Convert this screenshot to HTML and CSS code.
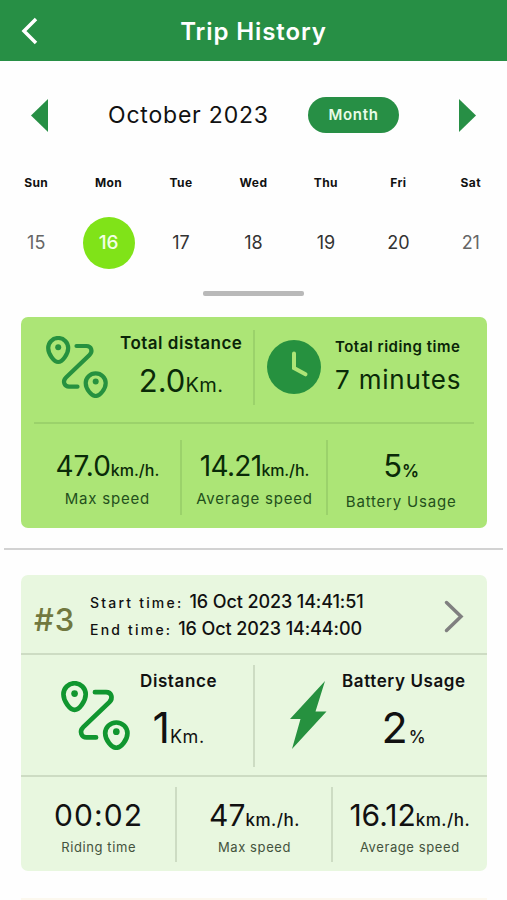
FILE: index.html
```html
<!DOCTYPE html>
<html lang="en">
<head>
    <meta charset="UTF-8">
    <title>Trip History</title>
    <link rel="stylesheet" href="styles.css">
</head>
<body>
    <svg class="defs">
        <symbol id="route" viewBox="0 0 62 62">
            <g fill="none" stroke="currentColor" stroke-width="4.200" stroke-linecap="round">
                <path d="M12.200 26C8 26 2.200 18 2.200 12a10 10 0 0 1 20 0C22.200 18 16.400 26 12.200 26z"/>
                <path d="M49.700 60C45.500 60 39.700 53 39.700 47a10 9.700 0 0 1 20 0C59.700 53 53.900 60 49.700 60z"/>
                <path d="M30.500 10h10c5 0 6.500 5.500 3 9L20 41.500c-4 4-1.500 9.200 3 9.200h8.500"/>
            </g>
            <circle cx="12.200" cy="11.300" r="3" fill="currentColor"/>
            <circle cx="49.700" cy="45.500" r="3" fill="currentColor"/>
        </symbol>
    </svg>

    <header class="header">
        <svg class="back" viewBox="0 0 18 28"><path d="M15 2L3 14l12 12"/></svg>
        <h1>Trip History</h1>
    </header>

    <div class="month_bar">
        <svg class="prev" viewBox="0 0 17 33"><path d="M17 0v33L0 16.500z"/></svg>
        <span class="month">October 2023</span>
        <span class="month_btn">Month</span>
        <svg class="next" viewBox="0 0 17 33"><path d="M0 0v33L17 16.500z"/></svg>
    </div>

    <div class="week names">
        <span>Sun</span><span>Mon</span><span>Tue</span><span>Wed</span><span>Thu</span><span>Fri</span><span>Sat</span>
    </div>
    <div class="week dates">
        <span class="dim">15</span><span class="active">16</span><span>17</span><span>18</span><span>19</span><span>20</span><span class="dim">21</span>
    </div>
    <div class="handle"></div>

    <!-- total of the day -->
    <section class="summary">
        <div class="summary_top">
            <div class="total_distance">
                <svg class="route_icon"><use href="#route"/></svg>
                <div class="text">
                    <h2>Total distance</h2>
                    <p class="value">2.0<small>Km.</small></p>
                </div>
            </div>
            <div class="total_time">
                <svg class="clock" viewBox="0 0 54 54">
                    <circle cx="27" cy="27" r="27"/>
                    <path d="M27 13.500v14.500l11.500 6.300"/>
                </svg>
                <div class="text">
                    <h2>Total riding time</h2>
                    <p class="value">7 minutes</p>
                </div>
            </div>
        </div>
        <div class="stats">
            <div class="stat">
                <p class="value">47.0<small>km./h.</small></p>
                <p class="label">Max speed</p>
            </div>
            <div class="stat average">
                <p class="value">14.21<small>km./h.</small></p>
                <p class="label">Average speed</p>
            </div>
            <div class="stat battery">
                <p class="value">5<small>%</small></p>
                <p class="label">Battery Usage</p>
            </div>
        </div>
    </section>

    <hr class="line">

    <!-- one trip -->
    <section class="trip">
        <div class="trip_head">
            <span class="number">#3</span>
            <div class="times">
                <p><span>Start time:</span>16 Oct 2023 14:41:51</p>
                <p><span>End time:</span>16 Oct 2023 14:44:00</p>
            </div>
            <svg class="more" viewBox="0 0 20 33"><path d="M2.500 2.500l14.500 14-14.500 14"/></svg>
        </div>
        <div class="trip_middle">
            <div class="trip_distance">
                <svg class="route_icon"><use href="#route"/></svg>
                <div class="text">
                    <h2>Distance</h2>
                    <p class="value">1<small>Km.</small></p>
                </div>
            </div>
            <div class="trip_battery">
                <svg class="bolt" viewBox="0 0 37 68"><path d="M35 0L0 38h10.500L2 68l34.500-37.500H25.500z"/></svg>
                <div class="text">
                    <h2>Battery Usage</h2>
                    <p class="value">2<small>%</small></p>
                </div>
            </div>
        </div>
        <div class="stats">
            <div class="stat">
                <p class="value clock_value">00:02</p>
                <p class="label">Riding time</p>
            </div>
            <div class="stat">
                <p class="value">47<small>km./h.</small></p>
                <p class="label">Max speed</p>
            </div>
            <div class="stat">
                <p class="value">16.12<small>km./h.</small></p>
                <p class="label">Average speed</p>
            </div>
        </div>
    </section>

    <section class="next_trip"></section>
</body>
</html>
```
FILE: styles.css
```css
* {
    margin: 0;
    padding: 0;
    box-sizing: border-box;
}
body {
    height: 900px;
    overflow: hidden;
    background-color: #fefefe;
    color: #111;
    font-family: "Inter", "Noto Sans", sans-serif;
    white-space: nowrap;
}
svg {
    display: block;
    flex: none;
}
.defs {
    position: absolute;
    width: 0;
    height: 0;
}

/* header */
.header {
    display: grid;
    grid-template-columns: 60px 1fr 60px;
    align-items: center;
    height: 61px;
    background-color: #278f45;
    color: #fff;
}
.header h1 {
    font-size: 24px;
    font-weight: 600;
    letter-spacing: 0.9px;
    text-align: center;
    line-height: 61px;
    padding-top: 1px;
}
.back {
    width: 18px;
    height: 28px;
    margin-left: 21px;
    fill: none;
    stroke: #fff;
    stroke-width: 3.5;
}

/* month */
.month_bar {
    display: flex;
    align-items: center;
    height: 108px;
    padding: 0 31px;
}
.prev, .next {
    width: 17px;
    height: 33px;
    fill: #278f45;
}
.month {
    width: 160px;
    margin: 0 40px 0 60px;
    font-size: 23px;
    line-height: 34px;
    letter-spacing: 0.8px;
}
.month_btn {
    width: 91px;
    height: 36px;
    border-radius: 18px;
    background-color: #278f45;
    color: #e8fbe8;
    font-size: 15px;
    font-weight: 600;
    letter-spacing: 0.7px;
    line-height: 36px;
    text-align: center;
}
.next {
    margin-left: auto;
}

/* week */
.week {
    display: grid;
    grid-template-columns: repeat(7, 1fr);
    justify-items: center;
}
.names {
    font-size: 12px;
    font-weight: 700;
    line-height: 27px;
    letter-spacing: 0.4px;
}
.dates {
    margin-top: 21px;
    font-size: 18px;
    line-height: 52px;
    color: #333;
}
.dates .dim {
    color: #666;
}
.dates .active {
    width: 52px;
    height: 52px;
    border-radius: 50%;
    background-color: #80e318;
    color: #f4ffe6;
    font-size: 19px;
    font-weight: 500;
    text-align: center;
}
.handle {
    width: 101px;
    height: 5px;
    margin: 22px auto 0;
    border-radius: 2px;
    background-color: #b9b9b9;
}

/* summary */
.summary {
    height: 211px;
    margin: 21px 20px 0 21px;
    padding: 0 13px;
    border-radius: 7px;
    background-color: #ace576;
    color: #0a2a08;
}
.summary_top {
    display: grid;
    grid-template-columns: 221px 1fr;
    height: 107px;
    padding: 13px 0 17px;
    border-bottom: 2px solid #9bd26b;
}
.summary .text {
    line-height: 26px;
}
.summary h2 {
    color: #0a2408;
}
.total_distance {
    display: flex;
    padding-left: 12px;
    border-right: 2px solid #9bd26b;
}
.total_distance .route_icon {
    width: 62px;
    height: 62px;
    margin-top: 6px;
    color: #26913f;
}
.total_distance .text {
    margin-left: 12px;
    text-align: center;
}
.total_distance h2 {
    font-size: 17px;
    font-weight: 600;
    letter-spacing: 0.5px;
}
.total_distance .value {
    margin-top: 2px;
    font-size: 31px;
    line-height: 46px;
}
.total_distance small {
    font-size: 20px;
    letter-spacing: 0.5px;
    line-height: 1;
}
.total_time {
    display: flex;
    padding-left: 12px;
}
.clock {
    width: 54px;
    height: 54px;
    margin-top: 10px;
}
.clock circle {
    fill: #26913f;
}
.clock path {
    fill: none;
    stroke: #ace576;
    stroke-width: 4;
    stroke-linecap: round;
}
.total_time .text {
    margin: 4px 0 0 14px;
}
.total_time h2 {
    font-size: 15px;
    font-weight: 600;
    letter-spacing: 0.5px;
}
.total_time .value {
    margin-top: 3px;
    font-size: 26px;
    line-height: 34px;
    letter-spacing: 0.8px;
}

/* three columns of numbers */
.stats {
    display: grid;
    grid-template-columns: repeat(3, 1fr);
}
.stat {
    text-align: center;
}
.stat + .stat {
    margin-left: -1px;
    border-left: 2px solid #9bd26b;
}
.stat small {
    font-weight: 500;
    line-height: 1;
}
.summary .stats {
    height: 75px;
    margin-top: 16px;
}
.summary .stat .value {
    padding-top: 6px;
    font-size: 28px;
    line-height: 40px;
}
.summary .stat small {
    font-size: 16px;
}
.summary .average .value {
    letter-spacing: -0.7px;
}
.summary .average small {
    letter-spacing: -0.1px;
}
.summary .stat .label {
    font-size: 15px;
    line-height: 25px;
    letter-spacing: 0.8px;
    color: #23501c;
}
.summary .battery .value {
    font-size: 31px;
}
.summary .battery small {
    font-size: 17px;
    font-weight: 600;
}
.summary .battery .label {
    padding-top: 3px;
}

.line {
    height: 2px;
    margin: 20px 4px 0;
    border: 0;
    background-color: #d2d2d2;
}

/* trip */
.trip {
    height: 296px;
    margin: 25px 20px 0 21px;
    border-radius: 7px;
    background-color: #e8f7df;
}
.trip_head {
    display: flex;
    height: 80px;
    border-bottom: 2px solid #cddcc3;
}
.number {
    width: 56px;
    margin-left: 13px;
    font-size: 31px;
    font-weight: 500;
    letter-spacing: 1px;
    line-height: 89px;
    color: #71783f;
}
.times {
    padding-top: 13px;
    font-size: 18px;
    font-weight: 500;
    line-height: 27px;
    letter-spacing: -0.1px;
}
.times span {
    margin-right: 6px;
    font-size: 14px;
    line-height: 1;
    letter-spacing: 2.2px;
}
.more {
    width: 20px;
    height: 33px;
    margin: 25px 23px 0 auto;
    fill: none;
    stroke: #808080;
    stroke-width: 3.5;
    stroke-linecap: round;
}
.trip_middle {
    display: grid;
    grid-template-columns: 234px 1fr;
    height: 122px;
    padding: 10px 0 8px;
    border-bottom: 2px solid #cddcc3;
}
.trip_distance {
    display: flex;
    padding-left: 40px;
    border-right: 2px solid #cddcc3;
}
.trip_distance .route_icon {
    width: 69px;
    height: 69px;
    margin-top: 16px;
    color: #10962f;
}
.trip_middle .text {
    text-align: center;
}
.trip_distance .text {
    margin-left: 10px;
}
.trip_middle h2 {
    padding-top: 3px;
    font-size: 17px;
    font-weight: 600;
    letter-spacing: 0.6px;
    line-height: 26px;
}
.trip_middle .value {
    margin-top: 3px;
    font-size: 43px;
    line-height: 60px;
}
.trip_middle small {
    font-size: 18px;
    line-height: 1;
    letter-spacing: 0.5px;
}
.trip_battery {
    display: flex;
}
.bolt {
    width: 37px;
    height: 68px;
    margin: 16px 15px 0 35px;
    fill: #26913f;
}
.trip_battery small {
    margin-left: 1px;
    font-weight: 500;
    font-size: 17px;
}
.trip .stats {
    height: 75px;
    margin-top: 10px;
}
.trip .stat + .stat {
    border-color: #cddcc3;
}
.trip .stat .value {
    padding-top: 8px;
    font-size: 30px;
    line-height: 40px;
}
.trip .stat .clock_value {
    letter-spacing: 1.1px;
}
.trip .stat small {
    font-size: 17px;
    letter-spacing: 0.5px;
}
.trip .stat .label {
    font-size: 13px;
    line-height: 25px;
    letter-spacing: 0.6px;
    color: #44533d;
}

/* only its top edge is on the screen */
.next_trip {
    height: 2px;
    margin: 27px 20px 0 21px;
    background-color: #fcf8ee;
}
```
